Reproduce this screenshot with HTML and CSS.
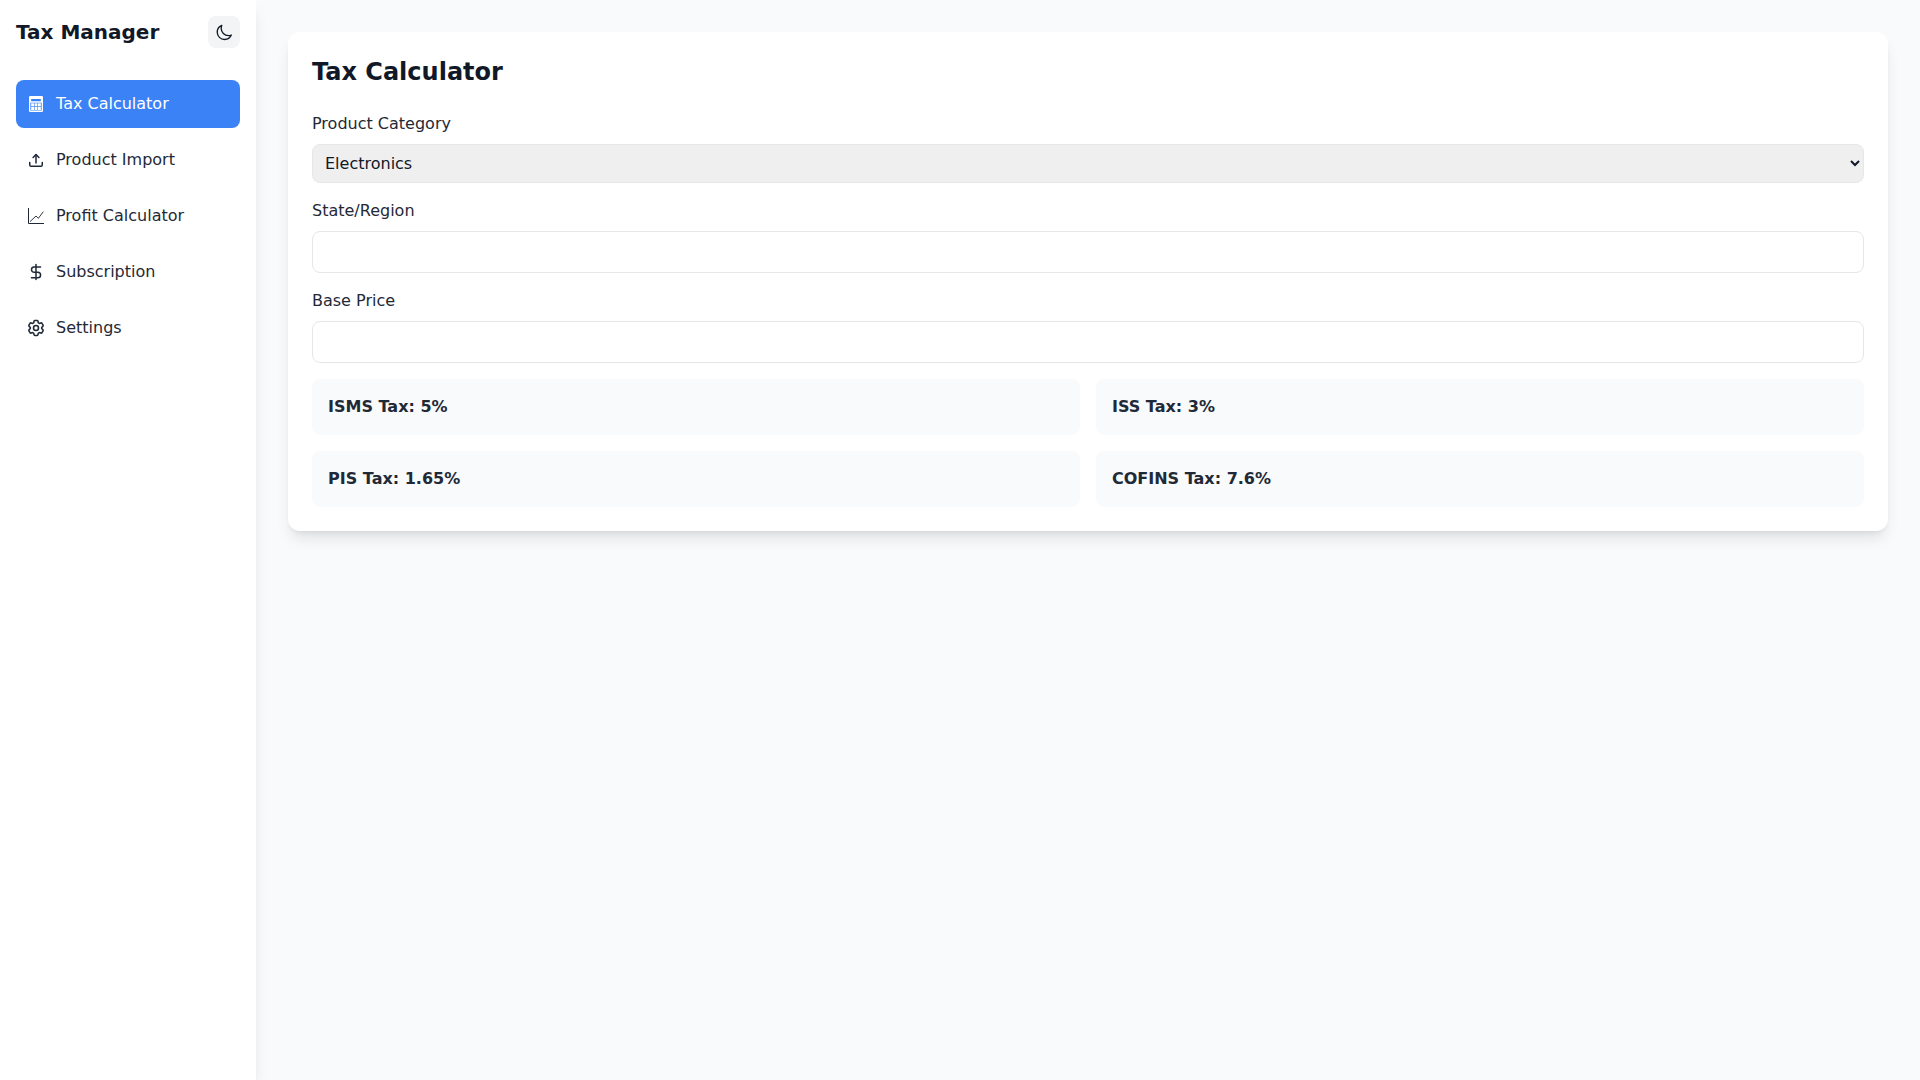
FILE: index.html
```html
<!DOCTYPE html>
<html lang="en">
<head>
    <meta charset="UTF-8">
    <title>Tax Manager</title>
    <link rel="stylesheet" href="styles.css">
</head>
<body>
    <div class="app">
        <!-- Sidebar -->
        <aside class="sidebar">
            <div class="sidebar-header">
                <h1 class="brand">Tax Manager</h1>
                <button class="theme-toggle" type="button">
                    <svg class="icon-small" viewBox="0 -1 24 24" fill="none" stroke="currentColor" stroke-width="1.8" stroke-linecap="round" stroke-linejoin="round"><path d="M21.752 15.002A9.718 9.718 0 0 1 18 15.750c-5.385 0-9.750-4.365-9.750-9.750 0-1.330.266-2.597.748-3.752A9.753 9.753 0 0 0 3 11.250C3 16.635 7.365 21 12.750 21a9.753 9.753 0 0 0 9.002-5.998Z"/></svg>
                </button>
            </div>
            <nav class="nav">
                <a class="nav-item active" href="#">
                    <svg class="icon" viewBox="0 0 24 24" fill="currentColor">
                        <path fill-rule="evenodd" d="M5 2.400h14a1.400 1.400 0 0 1 1.400 1.400v16.400a1.400 1.400 0 0 1-1.400 1.400H5a1.400 1.400 0 0 1-1.400-1.400V3.800a1.400 1.400 0 0 1 1.400-1.400ZM6.200 6v2.800h11.600V6H6.200Zm-1 4.500v9.400h13.600v-9.400H5.200Z"/>
                        <rect x="6.200" y="11.200" width="3.400" height="3.600"/>
                        <rect x="10.300" y="11.200" width="3.400" height="3.600"/>
                        <rect x="14.400" y="11.200" width="3.400" height="3.600"/>
                        <rect x="6.200" y="15.600" width="3.400" height="3.600"/>
                        <rect x="10.300" y="15.600" width="3.400" height="3.600"/>
                        <rect x="14.400" y="15.600" width="3.400" height="3.600"/>
                    </svg>
                    Tax Calculator
                </a>
                <a class="nav-item" href="#">
                    <svg class="icon" viewBox="0 0 24 24" fill="none" stroke="currentColor" stroke-width="1.8" stroke-linecap="round" stroke-linejoin="round"><path d="M4.500 15v3a1.500 1.500 0 0 0 1.500 1.500h12a1.500 1.500 0 0 0 1.500-1.500v-3"/><path d="M12 15.500V5.700"/><path d="M8.500 9 12 5.500 15.500 9"/></svg>
                    Product Import
                </a>
                <a class="nav-item" href="#">
                    <svg class="icon" viewBox="0 0 24 24" fill="none" stroke="currentColor" stroke-width="1.2"><path d="M3 2.400V21h18.600"/><path d="M4.800 18.800 12 12l2.800 2.800 6-8" stroke-width="1.100"/></svg>
                    Profit Calculator
                </a>
                <a class="nav-item" href="#">
                    <svg class="icon" viewBox="0 0 24 24" fill="none" stroke="currentColor" stroke-width="1.8" stroke-linecap="round" stroke-linejoin="round"><path d="M12 3v18"/><path d="M17.500 6H9.800a3.200 3.200 0 0 0 0 6.400h4.400a3.300 3.300 0 0 1 0 6.600H6.500"/></svg>
                    Subscription
                </a>
                <a class="nav-item" href="#">
                    <svg class="icon" viewBox="0 0 24 24" fill="none" stroke="currentColor" stroke-width="1.9" stroke-linecap="round" stroke-linejoin="round"><path d="M9.594 3.940c.090-.542.560-.940 1.110-.940h2.593c.550 0 1.020.398 1.110.940l.213 1.281c.063.374.313.686.645.870.074.040.147.083.220.127.325.196.720.257 1.075.124l1.217-.456a1.125 1.125 0 0 1 1.370.490l1.296 2.247a1.125 1.125 0 0 1-.260 1.431l-1.003.827c-.293.241-.438.613-.430.992a7.723 7.723 0 0 1 0 .255c-.008.378.137.750.430.991l1.004.827c.424.350.534.955.260 1.430l-1.298 2.247a1.125 1.125 0 0 1-1.369.491l-1.217-.456c-.355-.133-.750-.072-1.076.124a6.470 6.470 0 0 1-.220.128c-.331.183-.581.495-.644.869l-.213 1.281c-.090.543-.560.940-1.110.940h-2.594c-.550 0-1.019-.398-1.110-.940l-.213-1.281c-.062-.374-.312-.686-.644-.870a6.520 6.520 0 0 1-.220-.127c-.325-.196-.720-.257-1.076-.124l-1.217.456a1.125 1.125 0 0 1-1.369-.490l-1.297-2.247a1.125 1.125 0 0 1 .260-1.431l1.004-.827c.292-.240.437-.613.430-.991a6.932 6.932 0 0 1 0-.255c.007-.380-.138-.751-.430-.992l-1.004-.827a1.125 1.125 0 0 1-.260-1.430l1.297-2.247a1.125 1.125 0 0 1 1.370-.491l1.216.456c.356.133.751.072 1.076-.124.072-.044.146-.086.220-.128.332-.183.582-.495.644-.869l.214-1.280Z"/><path d="M15 12a3 3 0 1 1-6 0 3 3 0 0 1 6 0Z"/></svg>
                    Settings
                </a>
            </nav>
        </aside>

        <!-- Hauptbereich -->
        <main class="main">
            <section class="card">
                <h2 class="card-title">Tax Calculator</h2>
                <div class="form">
                    <div class="field">
                        <label class="field-label">Product Category</label>
                        <select class="field-select">
                            <option>Electronics</option>
                        </select>
                    </div>
                    <div class="field">
                        <label class="field-label">State/Region</label>
                        <input class="field-input" type="text">
                    </div>
                    <div class="field">
                        <label class="field-label">Base Price</label>
                        <input class="field-input" type="text">
                    </div>
                    <div class="tax-grid">
                        <div class="tax-box">ISMS Tax: 5%</div>
                        <div class="tax-box">ISS Tax: 3%</div>
                        <div class="tax-box">PIS Tax: 1.65%</div>
                        <div class="tax-box">COFINS Tax: 7.6%</div>
                    </div>
                </div>
            </section>
        </main>
    </div>
</body>
</html>
```

FILE: styles.css
```css
* {
    box-sizing: border-box;
}

body {
    margin: 0;
    font-family: "DejaVu Sans", sans-serif;
    font-size: 16px;
    line-height: 24px;
    background-color: #f9fafb;
    color: #111827;
}

.app {
    display: flex;
    min-height: 100vh;
}

/* Sidebar */
.sidebar {
    width: 256px;
    flex-shrink: 0;
    padding: 16px;
    background-color: white;
    box-shadow: 0 10px 15px -3px rgba(0, 0, 0, 0.1), 0 4px 6px -4px rgba(0, 0, 0, 0.1);
}

.sidebar-header {
    display: flex;
    align-items: center;
    justify-content: space-between;
    margin-bottom: 32px;
}

.brand {
    margin: 0;
    font-size: 20px;
    line-height: 28px;
    font-weight: 700;
}

.theme-toggle {
    display: flex;
    align-items: center;
    justify-content: center;
    width: 32px;
    height: 32px;
    padding: 0;
    border: none;
    border-radius: 8px;
    background-color: #f3f4f6;
    color: #111827;
}

.icon-small {
    width: 18px;
    height: 18px;
}

.nav {
    display: flex;
    flex-direction: column;
    gap: 8px;
}

.nav-item {
    display: flex;
    align-items: center;
    gap: 10px;
    padding: 12px 10px;
    border-radius: 8px;
    color: #1f2937;
    text-decoration: none;
}

.nav-item.active {
    background-color: #3b82f6;
    color: white;
}

.icon {
    width: 20px;
    height: 20px;
    flex-shrink: 0;
}

/* Hauptbereich */
.main {
    flex-grow: 1;
    padding: 32px;
}

.card {
    padding: 24px;
    border-radius: 12px;
    background-color: white;
    box-shadow: 0 10px 15px -3px rgba(0, 0, 0, 0.1), 0 4px 6px -4px rgba(0, 0, 0, 0.1);
}

.card-title {
    margin: 0 0 24px;
    font-size: 24px;
    line-height: 32px;
    font-weight: 700;
}

.form {
    display: flex;
    flex-direction: column;
    gap: 16px;
}

.field-label {
    display: block;
    margin-bottom: 8px;
    color: #1f2937;
}

.field-select,
.field-input {
    display: block;
    width: 100%;
    padding: 8px;
    border: 1px solid #e5e7eb;
    border-radius: 8px;
    font-family: inherit;
    font-size: 16px;
    color: #111827;
}

.field-select {
    background-color: #efefef;
}

.field-input {
    line-height: 24px;
    background-color: white;
}

.tax-grid {
    display: grid;
    grid-template-columns: 1fr 1fr;
    gap: 16px;
}

.tax-box {
    padding: 16px;
    border-radius: 8px;
    background-color: #f9fafb;
    color: #1f2937;
    font-weight: 700;
}
```
